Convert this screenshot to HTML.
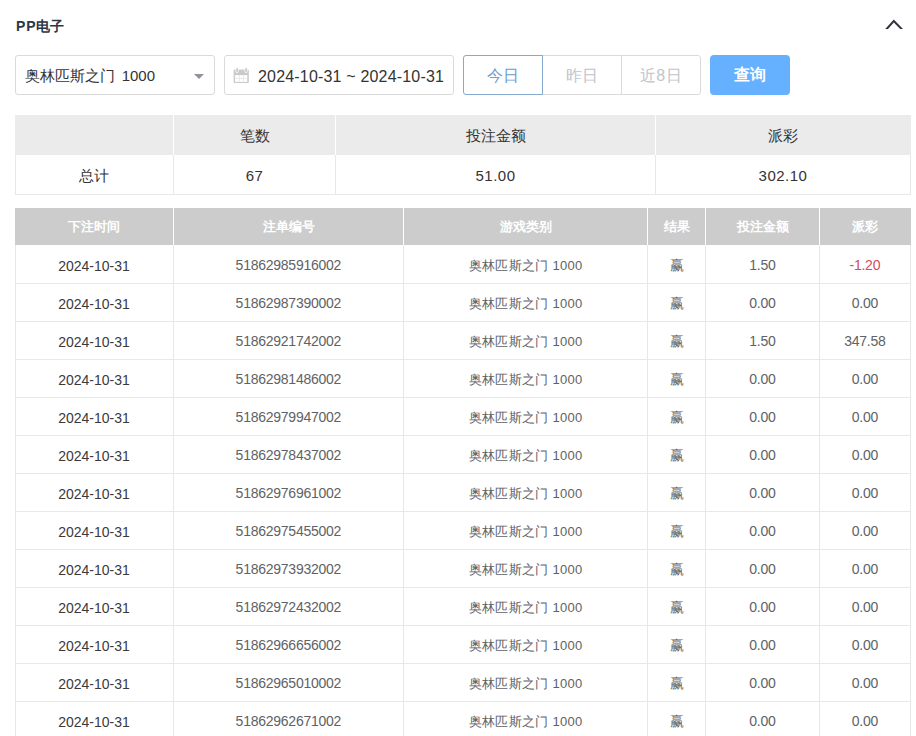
<!DOCTYPE html>
<html><head><meta charset="utf-8">
<style>
*{margin:0;padding:0;box-sizing:border-box}
html,body{width:916px;height:736px;overflow:hidden;background:#fff}
body{font-family:"Liberation Sans",sans-serif;color:#606266;position:relative}
.title{position:absolute;left:16px;top:16px;font-size:14px;font-weight:bold;color:#2d3646;line-height:20px}
.chev{position:absolute;left:880px;top:14px;width:28px;height:20px}
.sel{position:absolute;left:15px;top:55px;width:200px;height:40px;border:1px solid #dadada;border-radius:3px;font-size:15px;color:#333;line-height:38px;padding-left:9px;padding-top:1px;word-spacing:2.5px}
.sel .arr{position:absolute;left:178px;top:18px;width:0;height:0;border-left:5px solid transparent;border-right:5px solid transparent;border-top:5px solid #909399}
.date{position:absolute;left:224px;top:55px;width:230px;height:40px;border:1px solid #dadada;border-radius:3px;font-size:16px;color:#333;line-height:38px;padding-left:33px;padding-top:2px;letter-spacing:0.18px;white-space:nowrap}
.cal{position:absolute;left:8px;top:11px;width:17px;height:17px}
.rb{position:absolute;top:55px;height:40px;border:1px solid #dadada;font-size:16px;color:#c0c4cc;line-height:38px;padding-top:1px;letter-spacing:0.5px;text-align:center}
.rb.today{left:463px;width:80px;border-color:#84a8ce;color:#6a9dd2;border-radius:3px 0 0 3px;z-index:2}
.rb.yest{left:542px;width:80px}
.rb.near{left:621px;width:80px;border-radius:0 3px 3px 0}
.query{position:absolute;left:710px;top:55px;width:80px;height:40px;background:#66b1ff;border-radius:4px;color:#fff;font-size:16px;font-weight:bold;line-height:40px;text-align:center}
.vl{position:absolute;width:1px}
.hl{position:absolute;height:1px}
.w{background:#fff}
.g{background:#e8e8e8}
.t{position:absolute;text-align:center;white-space:nowrap}
.sh{height:40px;line-height:40px;padding-top:1px;font-size:15px;color:#333}
.sd{height:39px;line-height:39px;padding-top:1px;letter-spacing:0.5px;font-size:15px;color:#333}
.dh{height:37px;line-height:37px;font-size:13px;font-weight:bold;color:#fff}
.dd{height:38px;line-height:38px;padding-top:2px;font-size:13px;color:#606266}
.d2{font-size:14px;letter-spacing:-0.25px;text-indent:-0.25px;padding-top:1px}
.d4{font-size:14px;padding-top:1px}
.d1{font-size:14px;color:#3a3a3a}
.d3{letter-spacing:0.3px;text-indent:0.3px}
.d5,.d6{font-size:14px;letter-spacing:-0.25px;text-indent:-0.25px;padding-top:1px}
.neg{color:#d44a5c}
</style></head><body>
<div class="title"><span style="letter-spacing:0.8px">PP</span>电子</div>
<svg class="chev" viewBox="880 14 28 20"><polygon points="885.2,28.9 893.8,19.4 903,28.9 900.2,28.9 893.8,22.6 888,28.9" fill="#2f3440"/></svg>
<div class="sel">奥林匹斯之门 1000<span class="arr"></span></div>
<div class="date">2024-10-31 ~ 2024-10-31</div>
<svg style="position:absolute;left:232px;top:66px;width:20px;height:20px" viewBox="232 66 20 20"><rect x="233.6" y="69.6" width="15.2" height="13.3" rx="1" fill="#cacaca"/><rect x="235.1" y="75.1" width="12.2" height="6.8" fill="#fff"/><rect x="238.9" y="75.1" width="0.7" height="6.8" fill="#e2e2e2"/><rect x="242.9" y="75.1" width="0.7" height="6.8" fill="#e2e2e2"/><rect x="235.1" y="78.2" width="12.2" height="0.7" fill="#e2e2e2"/><rect x="235.8" y="67.6" width="2.6" height="5" rx="1.3" fill="#c6c6c6" stroke="#fff" stroke-width="0.8"/><rect x="244.8" y="67.6" width="2.6" height="5" rx="1.3" fill="#c6c6c6" stroke="#fff" stroke-width="0.8"/></svg>
<div class="rb today">今日</div>
<div class="rb yest">昨日</div>
<div class="rb near">近8日</div>
<div class="query">查询</div>
<div style="position:absolute;left:15px;top:115px;width:896px;height:40px;background:#ebebeb"></div>
<div class="vl w" style="left:173px;top:115px;height:40px"></div>
<div class="vl w" style="left:335px;top:115px;height:40px"></div>
<div class="vl w" style="left:655px;top:115px;height:40px"></div>
<div class="t sh" style="left:15px;top:115px;width:158px"></div>
<div class="t sh" style="left:174px;top:115px;width:161px">笔数</div>
<div class="t sh" style="left:336px;top:115px;width:319px">投注金额</div>
<div class="t sh" style="left:656px;top:115px;width:254px">派彩</div>
<div class="vl g" style="left:15px;top:155px;height:40px"></div>
<div class="vl g" style="left:173px;top:155px;height:40px"></div>
<div class="vl g" style="left:335px;top:155px;height:40px"></div>
<div class="vl g" style="left:655px;top:155px;height:40px"></div>
<div class="vl g" style="left:910px;top:155px;height:40px"></div>
<div class="hl g" style="left:15px;top:194px;width:896px"></div>
<div class="t sd" style="left:15px;top:155px;width:158px">总计</div>
<div class="t sd" style="left:174px;top:155px;width:161px">67</div>
<div class="t sd" style="left:336px;top:155px;width:319px">51.00</div>
<div class="t sd" style="left:656px;top:155px;width:254px">302.10</div>
<div style="position:absolute;left:15px;top:208px;width:896px;height:37px;background:#cccccc"></div>
<div class="vl w" style="left:173px;top:208px;height:37px"></div>
<div class="vl w" style="left:403px;top:208px;height:37px"></div>
<div class="vl w" style="left:647px;top:208px;height:37px"></div>
<div class="vl w" style="left:705px;top:208px;height:37px"></div>
<div class="vl w" style="left:819px;top:208px;height:37px"></div>
<div class="t dh" style="left:15px;top:208px;width:158px">下注时间</div>
<div class="t dh" style="left:174px;top:208px;width:229px">注单编号</div>
<div class="t dh" style="left:404px;top:208px;width:243px">游戏类别</div>
<div class="t dh" style="left:648px;top:208px;width:57px">结果</div>
<div class="t dh" style="left:706px;top:208px;width:113px">投注金额</div>
<div class="t dh" style="left:820px;top:208px;width:90px">派彩</div>
<div class="t dd d1" style="left:15px;top:245px;width:158px">2024-10-31</div>
<div class="t dd d2" style="left:174px;top:245px;width:229px">51862985916002</div>
<div class="t dd d3" style="left:404px;top:245px;width:243px">奥林匹斯之门 1000</div>
<div class="t dd d4" style="left:648px;top:245px;width:57px">赢</div>
<div class="t dd d5" style="left:706px;top:245px;width:113px">1.50</div>
<div class="t dd d6 neg" style="left:820px;top:245px;width:90px">-1.20</div>
<div class="hl g" style="left:15px;top:283px;width:896px"></div>
<div class="t dd d1" style="left:15px;top:283px;width:158px">2024-10-31</div>
<div class="t dd d2" style="left:174px;top:283px;width:229px">51862987390002</div>
<div class="t dd d3" style="left:404px;top:283px;width:243px">奥林匹斯之门 1000</div>
<div class="t dd d4" style="left:648px;top:283px;width:57px">赢</div>
<div class="t dd d5" style="left:706px;top:283px;width:113px">0.00</div>
<div class="t dd d6" style="left:820px;top:283px;width:90px">0.00</div>
<div class="hl g" style="left:15px;top:321px;width:896px"></div>
<div class="t dd d1" style="left:15px;top:321px;width:158px">2024-10-31</div>
<div class="t dd d2" style="left:174px;top:321px;width:229px">51862921742002</div>
<div class="t dd d3" style="left:404px;top:321px;width:243px">奥林匹斯之门 1000</div>
<div class="t dd d4" style="left:648px;top:321px;width:57px">赢</div>
<div class="t dd d5" style="left:706px;top:321px;width:113px">1.50</div>
<div class="t dd d6" style="left:820px;top:321px;width:90px">347.58</div>
<div class="hl g" style="left:15px;top:359px;width:896px"></div>
<div class="t dd d1" style="left:15px;top:359px;width:158px">2024-10-31</div>
<div class="t dd d2" style="left:174px;top:359px;width:229px">51862981486002</div>
<div class="t dd d3" style="left:404px;top:359px;width:243px">奥林匹斯之门 1000</div>
<div class="t dd d4" style="left:648px;top:359px;width:57px">赢</div>
<div class="t dd d5" style="left:706px;top:359px;width:113px">0.00</div>
<div class="t dd d6" style="left:820px;top:359px;width:90px">0.00</div>
<div class="hl g" style="left:15px;top:397px;width:896px"></div>
<div class="t dd d1" style="left:15px;top:397px;width:158px">2024-10-31</div>
<div class="t dd d2" style="left:174px;top:397px;width:229px">51862979947002</div>
<div class="t dd d3" style="left:404px;top:397px;width:243px">奥林匹斯之门 1000</div>
<div class="t dd d4" style="left:648px;top:397px;width:57px">赢</div>
<div class="t dd d5" style="left:706px;top:397px;width:113px">0.00</div>
<div class="t dd d6" style="left:820px;top:397px;width:90px">0.00</div>
<div class="hl g" style="left:15px;top:435px;width:896px"></div>
<div class="t dd d1" style="left:15px;top:435px;width:158px">2024-10-31</div>
<div class="t dd d2" style="left:174px;top:435px;width:229px">51862978437002</div>
<div class="t dd d3" style="left:404px;top:435px;width:243px">奥林匹斯之门 1000</div>
<div class="t dd d4" style="left:648px;top:435px;width:57px">赢</div>
<div class="t dd d5" style="left:706px;top:435px;width:113px">0.00</div>
<div class="t dd d6" style="left:820px;top:435px;width:90px">0.00</div>
<div class="hl g" style="left:15px;top:473px;width:896px"></div>
<div class="t dd d1" style="left:15px;top:473px;width:158px">2024-10-31</div>
<div class="t dd d2" style="left:174px;top:473px;width:229px">51862976961002</div>
<div class="t dd d3" style="left:404px;top:473px;width:243px">奥林匹斯之门 1000</div>
<div class="t dd d4" style="left:648px;top:473px;width:57px">赢</div>
<div class="t dd d5" style="left:706px;top:473px;width:113px">0.00</div>
<div class="t dd d6" style="left:820px;top:473px;width:90px">0.00</div>
<div class="hl g" style="left:15px;top:511px;width:896px"></div>
<div class="t dd d1" style="left:15px;top:511px;width:158px">2024-10-31</div>
<div class="t dd d2" style="left:174px;top:511px;width:229px">51862975455002</div>
<div class="t dd d3" style="left:404px;top:511px;width:243px">奥林匹斯之门 1000</div>
<div class="t dd d4" style="left:648px;top:511px;width:57px">赢</div>
<div class="t dd d5" style="left:706px;top:511px;width:113px">0.00</div>
<div class="t dd d6" style="left:820px;top:511px;width:90px">0.00</div>
<div class="hl g" style="left:15px;top:549px;width:896px"></div>
<div class="t dd d1" style="left:15px;top:549px;width:158px">2024-10-31</div>
<div class="t dd d2" style="left:174px;top:549px;width:229px">51862973932002</div>
<div class="t dd d3" style="left:404px;top:549px;width:243px">奥林匹斯之门 1000</div>
<div class="t dd d4" style="left:648px;top:549px;width:57px">赢</div>
<div class="t dd d5" style="left:706px;top:549px;width:113px">0.00</div>
<div class="t dd d6" style="left:820px;top:549px;width:90px">0.00</div>
<div class="hl g" style="left:15px;top:587px;width:896px"></div>
<div class="t dd d1" style="left:15px;top:587px;width:158px">2024-10-31</div>
<div class="t dd d2" style="left:174px;top:587px;width:229px">51862972432002</div>
<div class="t dd d3" style="left:404px;top:587px;width:243px">奥林匹斯之门 1000</div>
<div class="t dd d4" style="left:648px;top:587px;width:57px">赢</div>
<div class="t dd d5" style="left:706px;top:587px;width:113px">0.00</div>
<div class="t dd d6" style="left:820px;top:587px;width:90px">0.00</div>
<div class="hl g" style="left:15px;top:625px;width:896px"></div>
<div class="t dd d1" style="left:15px;top:625px;width:158px">2024-10-31</div>
<div class="t dd d2" style="left:174px;top:625px;width:229px">51862966656002</div>
<div class="t dd d3" style="left:404px;top:625px;width:243px">奥林匹斯之门 1000</div>
<div class="t dd d4" style="left:648px;top:625px;width:57px">赢</div>
<div class="t dd d5" style="left:706px;top:625px;width:113px">0.00</div>
<div class="t dd d6" style="left:820px;top:625px;width:90px">0.00</div>
<div class="hl g" style="left:15px;top:663px;width:896px"></div>
<div class="t dd d1" style="left:15px;top:663px;width:158px">2024-10-31</div>
<div class="t dd d2" style="left:174px;top:663px;width:229px">51862965010002</div>
<div class="t dd d3" style="left:404px;top:663px;width:243px">奥林匹斯之门 1000</div>
<div class="t dd d4" style="left:648px;top:663px;width:57px">赢</div>
<div class="t dd d5" style="left:706px;top:663px;width:113px">0.00</div>
<div class="t dd d6" style="left:820px;top:663px;width:90px">0.00</div>
<div class="hl g" style="left:15px;top:701px;width:896px"></div>
<div class="t dd d1" style="left:15px;top:701px;width:158px">2024-10-31</div>
<div class="t dd d2" style="left:174px;top:701px;width:229px">51862962671002</div>
<div class="t dd d3" style="left:404px;top:701px;width:243px">奥林匹斯之门 1000</div>
<div class="t dd d4" style="left:648px;top:701px;width:57px">赢</div>
<div class="t dd d5" style="left:706px;top:701px;width:113px">0.00</div>
<div class="t dd d6" style="left:820px;top:701px;width:90px">0.00</div>
<div class="hl g" style="left:15px;top:739px;width:896px"></div>
<div class="vl g" style="left:15px;top:245px;height:500px"></div>
<div class="vl g" style="left:173px;top:245px;height:500px"></div>
<div class="vl g" style="left:403px;top:245px;height:500px"></div>
<div class="vl g" style="left:647px;top:245px;height:500px"></div>
<div class="vl g" style="left:705px;top:245px;height:500px"></div>
<div class="vl g" style="left:819px;top:245px;height:500px"></div>
<div class="vl g" style="left:910px;top:245px;height:500px"></div>
</body></html>
